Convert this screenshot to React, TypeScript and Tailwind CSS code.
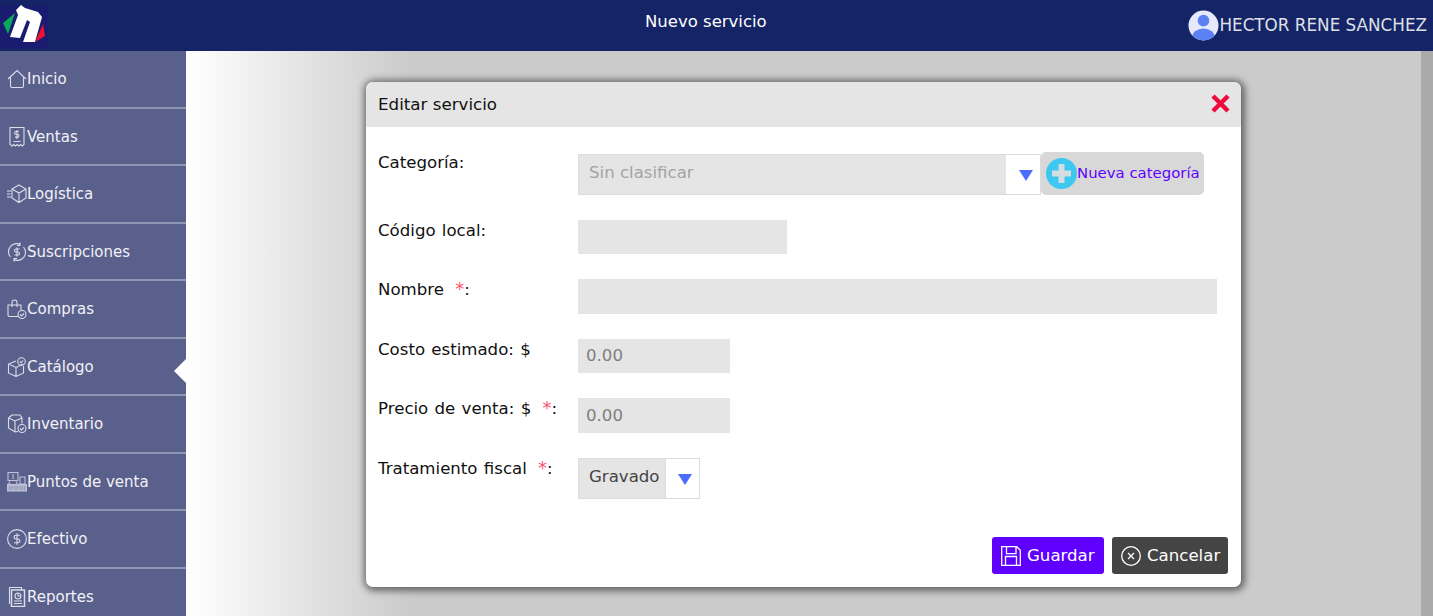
import type { ReactNode } from 'react';

const ICON = 'size-5 shrink-0 fill-none stroke-[#dcdde8] stroke-[1.1]';

function Logo() {
  return (
    <svg viewBox="0 0 50 51" className="h-[51px] w-[50px] shrink-0">
      <rect x="0" y="6" width="49" height="42" fill="#1a1c72" />
      <polygon points="3,23 15,13 8,34" fill="#0aa85a" />
      <polygon points="21,5 25,8 38,12 42,17 35,42 23,42 30,22 27,20 20,38 10,37 18,15 16,10" fill="#fff" />
      <polygon points="43,24 45,36 35,42" fill="#f0102c" />
    </svg>
  );
}

const icons: Record<string, ReactNode> = {
  Inicio: (
    <svg viewBox="0 0 20 20" className={ICON}>
      <path d="M1 10 10 1.500 19 10M3.500 8.500V17a1.500 1.500 0 0 0 1.500 1.500h10a1.500 1.500 0 0 0 1.500-1.500V8.500" />
    </svg>
  ),
  Ventas: (
    <svg viewBox="0 0 20 20" className={ICON}>
      <path d="M3 .5h14v17l-1.700 1.500-1.700-1.500-1.700 1.500-1.700-1.500-1.700 1.500-1.700-1.500-1.700 1.500L3 17.500z" />
      <path d="M6.500 14.500h7M11.800 4.500H9a1.300 1.300 0 0 0 0 2.800h1.500a1.300 1.300 0 0 1 0 2.800H8M10 3v9" />
    </svg>
  ),
  Logística: (
    <svg viewBox="0 0 20 20" className={ICON}>
      <path d="M12 1 19 5v9l-7 4.500L5 14V5zM5 5l7 4 7-4M12 9v9.500M0 7h4M0 10h3.500M0 13h4" />
    </svg>
  ),
  Suscripciones: (
    <svg viewBox="0 0 20 20" className={ICON}>
      <path d="M3.500 15A8 8 0 0 1 13 2.500M16.500 5A8 8 0 0 1 7 17.500M13 .5v3h-3M7 19.500v-3h3" />
      <path d="M12.500 7H9a1.500 1.500 0 0 0 0 3h2a1.500 1.500 0 0 1 0 3H7.500M10 5.500v9" />
    </svg>
  ),
  Compras: (
    <svg viewBox="0 0 20 20" className={ICON}>
      <path d="M11 17.500H2.500a1.500 1.500 0 0 1-1.500-1.500V6h13v5M5 8V3.500a2.500 2.500 0 0 1 5 0V8" />
      <circle cx="15" cy="15.500" r="4" />
      <path d="m13 15.500 1.500 1.500 2.500-2.500" />
    </svg>
  ),
  Catálogo: (
    <svg viewBox="0 0 20 20" className={ICON}>
      <path d="M9 4 1.500 7v9l7.500 3.500 7.500-3.500V9M1.500 7 9 10.500 16.500 7M9 10.500v9" />
      <circle cx="14.500" cy="4.500" r="3.800" />
      <path d="m12.800 4.500 1.300 1.300 2-2.300" />
    </svg>
  ),
  Inventario: (
    <svg viewBox="0 0 20 20" className={ICON}>
      <path d="M5 1h8l2 3v5.500M5 1 1.500 4v10L8 18l3-.5M1.500 4 8 7l7-3M8 7v11" />
      <circle cx="15" cy="14.500" r="4" />
      <path d="m13 14.500 1.500 1.500 2.500-2.500" />
    </svg>
  ),
  'Puntos de venta': (
    <svg viewBox="0 0 20 20" className="size-5 shrink-0 fill-none stroke-[#bfc2d6] stroke-[1.100]">
      <rect x="1" y="0.500" width="10" height="8" />
      <path d="M6 2v5M3 9.500 1.500 12.500M9 9.500l1.500 3M13 5h5v7h-5z" />
      <rect x="0.500" y="12.500" width="19" height="6.500" fill="#b6b9cf" />
      <path d="M2 15h16M2 17h16" stroke="#7f84a8" strokeDasharray="1.500 1" />
    </svg>
  ),
  Efectivo: (
    <svg viewBox="0 0 20 20" className={ICON}>
      <circle cx="10" cy="10" r="9.400" />
      <path d="M13 6.300H9a1.800 1.800 0 0 0 0 3.700h2a1.800 1.800 0 0 1 0 3.700H7M10 4.300v11.400" />
    </svg>
  ),
  Reportes: (
    <svg viewBox="0 0 20 20" className={ICON}>
      <path d="M2.500 17V.5h12V3" />
      <rect x="4.500" y="3" width="13" height="16.500" strokeWidth="1.500" />
      <circle cx="11" cy="9" r="3" />
      <path d="M11 6v3h3M7 14h8M7 16.500h8" />
    </svg>
  ),
};

const menu = [
  'Inicio',
  'Ventas',
  'Logística',
  'Suscripciones',
  'Compras',
  'Catálogo',
  'Inventario',
  'Puntos de venta',
  'Efectivo',
  'Reportes',
];

function Caret({ className }: { className: string }) {
  return (
    <span className={`flex items-center justify-center bg-white ${className}`}>
      <svg viewBox="0 0 14 11" className="ml-[5px] mt-[2px] h-[11px] w-[14px]">
        <polygon points="0,0 14,0 7,11" fill="#4a6cff" />
      </svg>
    </span>
  );
}

function Req() {
  return <span className="ml-[5px] text-[18px] leading-[0] text-[#f9566e]">*</span>;
}

function Row({ label, className, children }: { label: ReactNode; className: string; children: ReactNode }) {
  return (
    <div className={`flex items-start ${className}`}>
      <div className="w-[200px] shrink-0 pt-[1px] text-[16.600px] leading-[19px] text-[#111111] [word-spacing:1px]">
        {label}
      </div>
      {children}
    </div>
  );
}

export default function App() {
  return (
    <div className="flex h-[616px] w-[1433px] flex-col overflow-hidden bg-white font-['DejaVu_Sans',sans-serif]">
      <header className="flex h-[51px] shrink-0 items-center bg-[#142466] text-white">
        <Logo />
        <div className="mb-[6px] flex-1 pl-[595px] text-[16.500px]">Nuevo servicio</div>
        <div className="mr-[6px] flex items-center text-[16.800px] text-[#dfe0e6]">
          <svg viewBox="0 0 32 32" className="size-[31px] shrink-0">
            <defs>
              <clipPath id="avatar">
                <circle cx="16" cy="16" r="15.500" />
              </clipPath>
            </defs>
            <circle cx="16" cy="16" r="15.500" fill="#e6e9fb" />
            <g clipPath="url(#avatar)" fill="#5b81f5">
              <circle cx="16" cy="11" r="6" />
              <ellipse cx="16" cy="29" rx="12" ry="10" />
            </g>
          </svg>
          <span>HECTOR RENE SANCHEZ</span>
        </div>
      </header>
      <div className="flex min-h-0 flex-1">
        <nav className="flex w-[186px] shrink-0 flex-col bg-[#5a608c]">
          {menu.map((name) => (
            <div
              key={name}
              className="relative flex h-[57.5px] shrink-0 items-center border-b-2 border-[#9195b5] pl-[7px] pt-[1px] text-[15px] text-[#f1f1f6]"
            >
              {icons[name]}
              <span>{name}</span>
              {name === 'Catálogo' && (
                <span className="absolute right-0 top-[20px] h-0 w-0 border-y-[12px] border-r-[12px] border-y-transparent border-r-white" />
              )}
            </div>
          ))}
        </nav>
        <main className="flex min-w-0 flex-1 bg-[linear-gradient(to_right,#ffffff_0%,#cbcbcb_18%,#cbcbcb_100%)] pl-[180px] pt-[31px]">
          <section className="h-[505px] w-[875px] overflow-hidden rounded-[7px] bg-white shadow-[1px_1px_7px_3px_rgba(0,0,0,0.5)]">
            <div className="flex h-[45px] items-center justify-between bg-[#e5e5e5] pl-[12px] pr-[11px] text-[16.700px] text-[#111111]">
              <span>Editar servicio</span>
              <svg viewBox="0 0 19 19" className="mb-[3px] size-[19px]">
                <path d="M2 2 17 17M17 2 2 17" stroke="#ee0b3c" strokeWidth="4.500" />
              </svg>
            </div>
            <div className="px-[12px] pt-[25px]">
              <Row label="Categoría:" className="h-[68px]">
                <div className="flex h-[43px] items-end">
                  <div className="flex h-[41px] w-[463px] border border-[#dcdcdc] bg-[#e5e5e5]">
                    <span className="flex-1 pl-[10px] pt-[6px] text-[16.600px] text-[#a3a3a3]">Sin clasificar</span>
                    <Caret className="w-[34px]" />
                  </div>
                  <button className="flex h-[43px] w-[163px] items-center rounded-[5px] bg-[#d8d8d8] pl-[5px] text-[14.900px] text-[#5f00ff]">
                    <svg viewBox="0 0 31 31" className="size-[31px] shrink-0">
                      <circle cx="15.500" cy="15.500" r="15.500" fill="#3cc8f0" />
                      <path d="M12.500 6h6v6.500H25v6h-6.500V25h-6v-6.500H6v-6h6.500z" fill="#d4dde2" />
                    </svg>
                    Nueva categoría
                  </button>
                </div>
              </Row>
              <Row label="Código local:" className="h-[59px]">
                <div className="h-[34px] w-[209px] bg-[#e5e5e5]" />
              </Row>
              <Row label={<>Nombre <Req />:</>} className="h-[60px]">
                <div className="h-[35px] w-[639px] bg-[#e5e5e5]" />
              </Row>
              <Row label="Costo estimado: $" className="h-[59px]">
                <div className="flex h-[34px] w-[152px] items-center bg-[#e5e5e5] pl-[8px] pt-[1px] text-[16.600px] text-[#808080]">0.00</div>
              </Row>
              <Row label={<>Precio de venta: $ <Req />:</>} className="h-[60px]">
                <div className="flex h-[35px] w-[152px] items-center bg-[#e5e5e5] pl-[8px] pt-[1px] text-[16.600px] text-[#808080]">0.00</div>
              </Row>
              <Row label={<>Tratamiento fiscal <Req />:</>} className="h-[79px]">
                <div className="flex h-[41px] w-[122px] border border-[#dcdcdc] bg-[#e5e5e5]">
                  <span className="flex-1 pl-[10px] pt-[6px] text-[16.600px] text-[#444444]">Gravado</span>
                  <Caret className="w-[34px] border-l border-[#dcdcdc]" />
                </div>
              </Row>
              <div className="flex justify-end gap-[8px] pr-[1px]">
                <button className="flex h-[37px] w-[112px] items-center gap-[6px] rounded-[3px] bg-[#5f00ff] pl-[9px] text-[16.600px] text-white">
                  <svg viewBox="0 0 20 20" className="size-5 shrink-0 fill-none stroke-white stroke-[1.300]">
                    <path d="M.7.7h15l3.600 3.600v15H.7zM5.500.7v7h9.500v-7M4.500 19.300v-8.800h11v8.800" />
                  </svg>
                  <span className="pt-[2px]">Guardar</span>
                </button>
                <button className="flex h-[37px] w-[116px] items-center gap-[6px] rounded-[3px] bg-[#444444] pl-[9px] text-[16.600px] text-white">
                  <svg viewBox="0 0 20 20" className="size-5 shrink-0 fill-none stroke-white stroke-[1.300]">
                    <circle cx="10" cy="10" r="9.300" />
                    <path d="m7 7 6 6M13 7l-6 6" />
                  </svg>
                  <span className="pt-[2px]">Cancelar</span>
                </button>
              </div>
            </div>
          </section>
          <div className="-mt-[31px] ml-auto w-[12px] shrink-0 self-stretch bg-[#aaaaaa]" />
        </main>
      </div>
    </div>
  );
}
